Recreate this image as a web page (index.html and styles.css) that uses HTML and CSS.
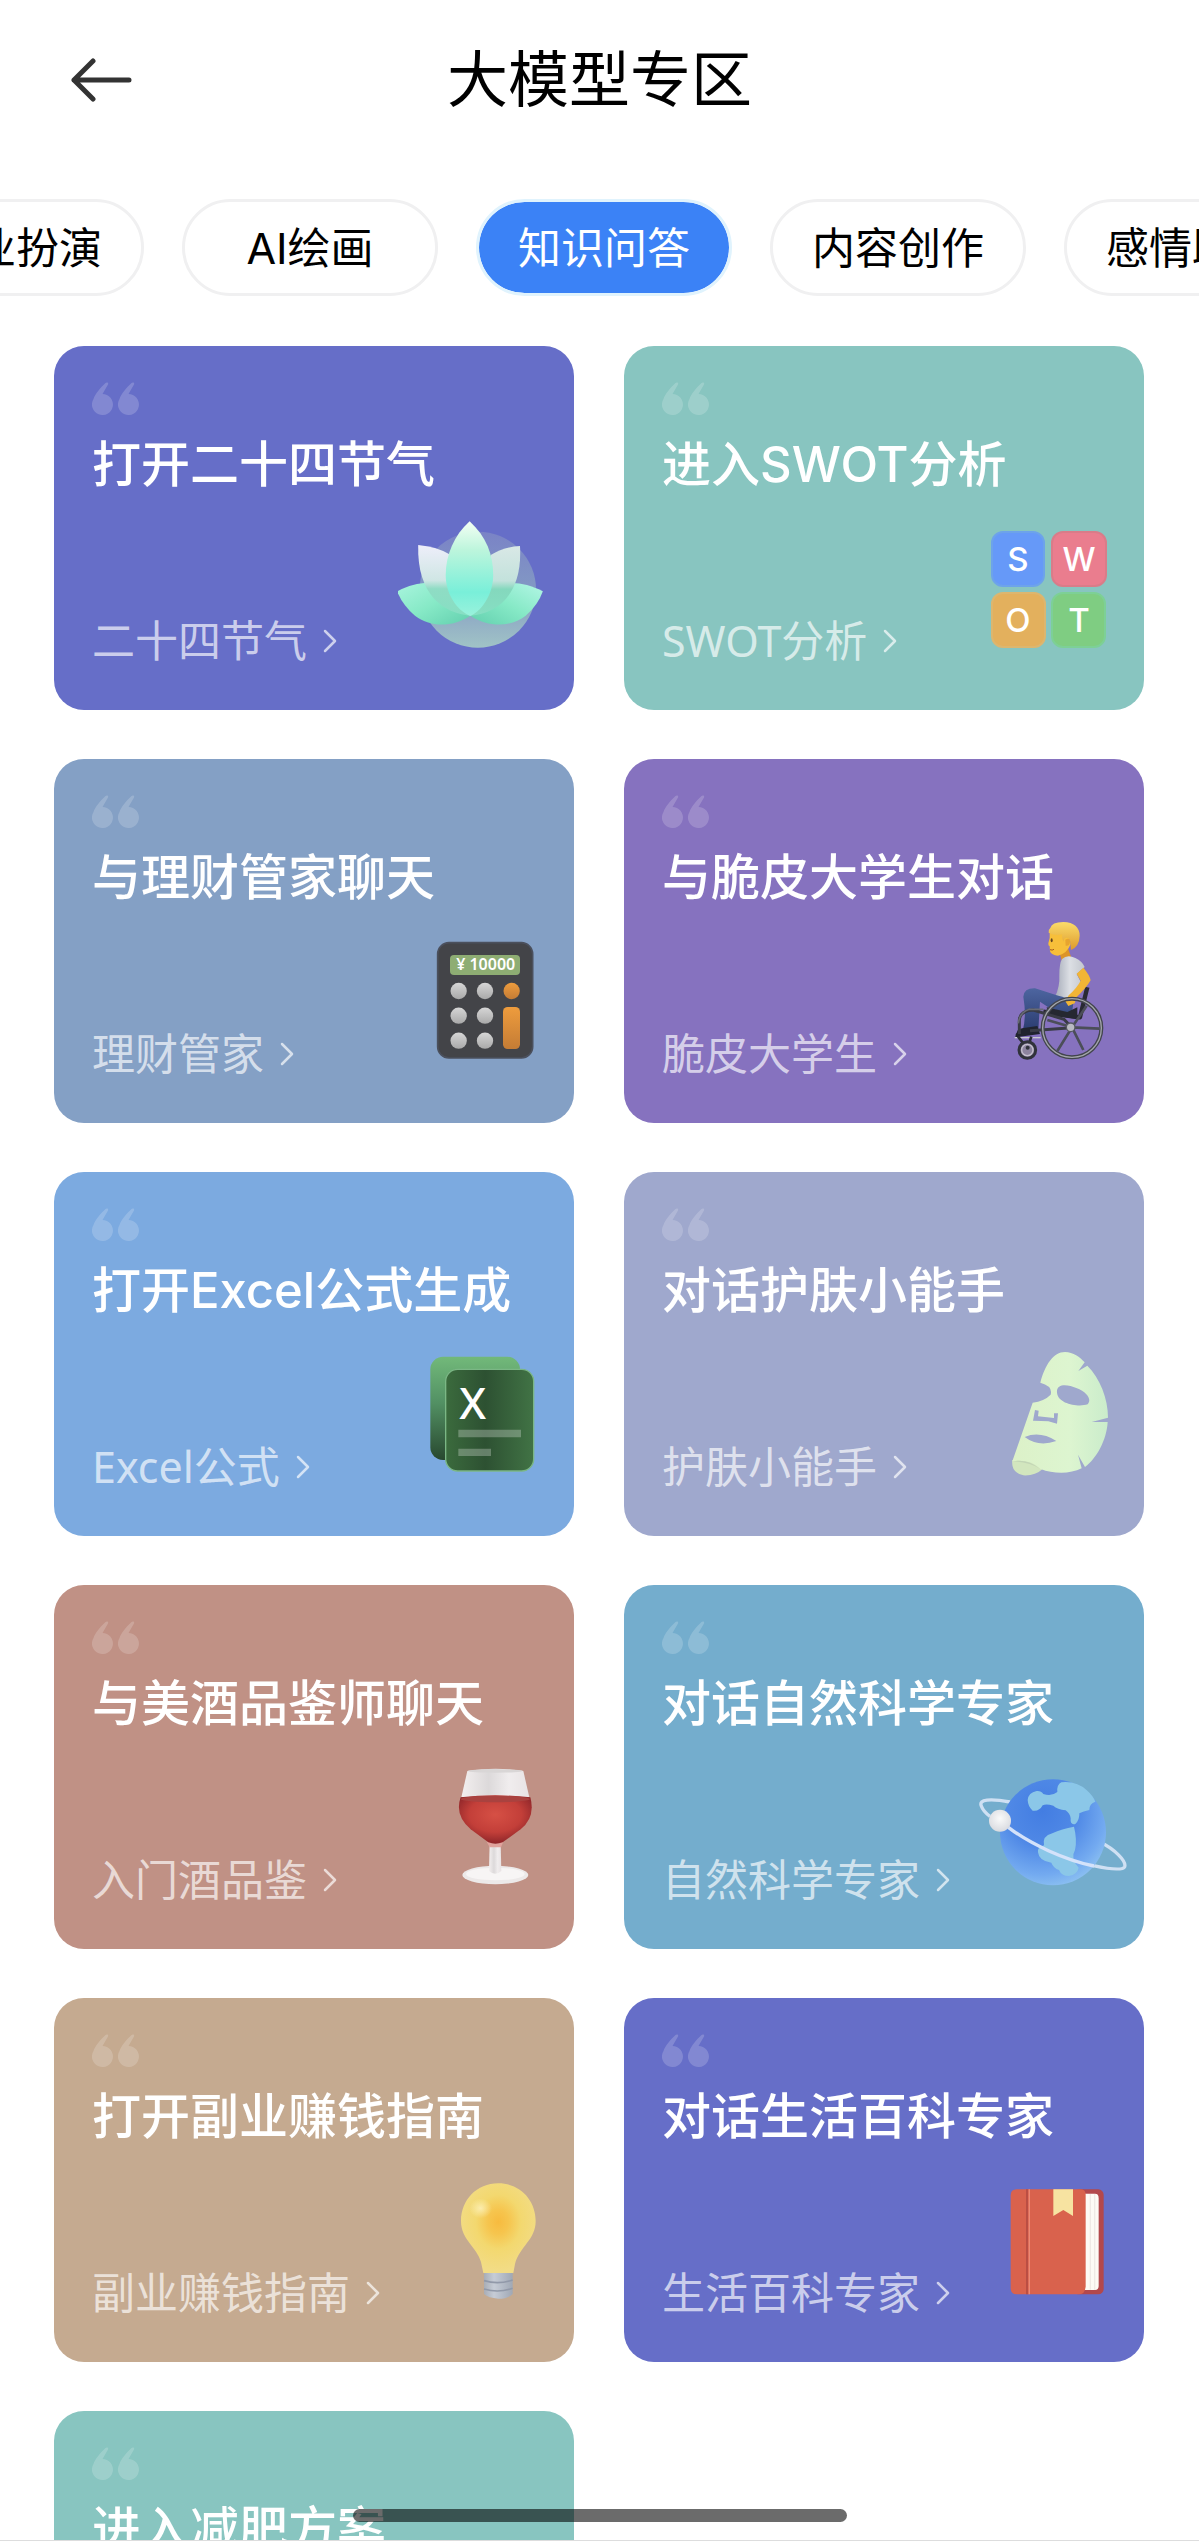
FILE: index.html
```html
<!DOCTYPE html>
<html lang="zh-CN">
<head>
<meta charset="utf-8">
<meta name="viewport" content="width=device-width, initial-scale=1">
<title>大模型专区</title>
<link rel="stylesheet" href="styles.css">
</head>
<body>
<svg class="defs" aria-hidden="true">
  <symbol id="quote" viewBox="0 0 48 33">
    <path d="M15 0.500C16 .5 16.500 1.500 16 2.500L10.500 12A10.500 10.500 0 1 1 1.500 17C3 12 9 5 13.500 1Q14.200 .4 15 .5Z"/>
    <path d="M41 0.500C42 .5 42.500 1.500 42 2.500L36.500 12A10.500 10.500 0 1 1 27.500 17C29 12 35 5 39.500 1Q40.200 .4 41 .5Z"/>
  </symbol>
  <symbol id="chevron" viewBox="0 0 14 24">
    <path d="M2 2L12 12L2 22" fill="none" stroke="currentColor" stroke-width="2.500" stroke-linecap="round" stroke-linejoin="round"/>
  </symbol>
</svg>
<div class="app">
  <header class="header">
    <button class="back" type="button" aria-label="返回">
      <svg class="back-icon" viewBox="0 0 62 44" aria-hidden="true"><path d="M23 3L4 22L23 41M4 22H59" fill="none" stroke="#333" stroke-width="5" stroke-linecap="round" stroke-linejoin="round"/></svg>
    </button>
    <h1 class="page-title">大模型专区</h1>
  </header>

  <nav class="tabs" aria-label="分类">
    <button class="tab" type="button">职业扮演</button>
    <button class="tab" type="button">AI绘画</button>
    <button class="tab tab-active" type="button" aria-current="true">知识问答</button>
    <button class="tab" type="button">内容创作</button>
    <button class="tab" type="button">感情助手</button>
  </nav>

  <main class="cards">
    <a class="card indigo" href="#solar-terms">
      <svg class="quote" aria-hidden="true"><use href="#quote"/></svg>
      <h2 class="card-title">打开二十四节气</h2>
      <div class="card-foot">
        <span class="card-name">二十四节气<svg class="chevron" aria-hidden="true"><use href="#chevron"/></svg></span>
        <svg class="art" viewBox="1074 513 480 480" aria-hidden="true">
          <defs>
            <linearGradient id="petalMid" x1="0" y1="0" x2="0" y2="1"><stop offset="0" stop-color="#f4fff4"/><stop offset=".3" stop-color="#bdf5dc"/><stop offset=".75" stop-color="#79efd9"/><stop offset="1" stop-color="#9af2dc"/></linearGradient>
            <linearGradient id="petalBack" x1="0" y1="0" x2="0" y2="1"><stop offset="0" stop-color="#eeeefa"/><stop offset=".5" stop-color="#cfe6e4"/><stop offset=".62" stop-color="#8fdcc4"/><stop offset="1" stop-color="#86dfc3"/></linearGradient>
            <linearGradient id="petalBackR" x1="0" y1="0" x2="0" y2="1"><stop offset="0" stop-color="#d9e8e6"/><stop offset=".5" stop-color="#c3e2dc"/><stop offset=".62" stop-color="#84d8bd"/><stop offset="1" stop-color="#86dfc3"/></linearGradient>
            <linearGradient id="petalLow" x1="0" y1="0" x2="1" y2="1"><stop offset="0" stop-color="#a9f5de"/><stop offset=".5" stop-color="#86e9c6"/><stop offset="1" stop-color="#62cfae"/></linearGradient>
            <linearGradient id="petalLowR" x1="1" y1="0" x2="0" y2="1"><stop offset="0" stop-color="#b4f6e6"/><stop offset=".5" stop-color="#86e9c6"/><stop offset="1" stop-color="#62cfae"/></linearGradient>
            <linearGradient id="moon" x1="0" y1="0" x2="0" y2="1"><stop offset="0" stop-color="#7a83c6"/><stop offset=".5" stop-color="#8298c4"/><stop offset="1" stop-color="#a0c3c6"/></linearGradient>
          </defs>
          <g transform="scale(1.0714 1)">
            <ellipse cx="1226" cy="779" rx="163" ry="174" fill="url(#moon)"/>
            <path d="M1000 784C1060 750 1125 750 1165 790Q1190 830 1205 857C1150 895 1090 890 1050 857Q1015 825 1000 784Z" fill="url(#petalLow)"/>
            <path d="M1408 784C1345 750 1285 750 1245 790Q1215 830 1205 857C1260 895 1320 890 1360 857Q1395 825 1408 784Z" fill="url(#petalLowR)"/>
            <path d="M1059 645Q1110 650 1145 672L1205 857C1130 850 1055 795 1059 645Z" fill="url(#petalBack)"/>
            <path d="M1344 648Q1300 650 1262 675L1205 857C1280 850 1352 795 1344 648Z" fill="url(#petalBackR)"/>
            <path d="M1203 574C1250 620 1269 675 1269 735C1269 790 1240 840 1205 858C1165 840 1136 790 1136 735C1136 675 1160 615 1203 574Z" fill="url(#petalMid)"/>
          </g>
        </svg>
      </div>
    </a>

    <a class="card teal" href="#swot">
      <svg class="quote" aria-hidden="true"><use href="#quote"/></svg>
      <h2 class="card-title">进入SWOT分析</h2>
      <div class="card-foot">
        <span class="card-name">SWOT分析<svg class="chevron" aria-hidden="true"><use href="#chevron"/></svg></span>
        <svg class="art" viewBox="0 0 160 160" aria-hidden="true">
          <g stroke-width="2">
            <rect x="24" y="31" width="52" height="54" rx="11" fill="#6699f8" stroke="#6da3ea"/>
            <rect x="84" y="31" width="54" height="54" rx="11" fill="#ea7d8e" stroke="#d97c89"/>
            <rect x="24" y="92" width="53" height="54" rx="11" fill="#e3b05d" stroke="#dcb66f"/>
            <rect x="84" y="92" width="53" height="54" rx="11" fill="#7fcd82" stroke="#7dd096"/>
          </g>
          <g class="tile-text">
            <text x="50" y="70">S</text><text x="111" y="70">W</text><text x="50" y="131">O</text><text x="111" y="131">T</text>
          </g>
        </svg>
      </div>
    </a>

    <a class="card steel" href="#finance">
      <svg class="quote" aria-hidden="true"><use href="#quote"/></svg>
      <h2 class="card-title">与理财管家聊天</h2>
      <div class="card-foot">
        <span class="card-name">理财管家<svg class="chevron" aria-hidden="true"><use href="#chevron"/></svg></span>
        <svg class="art" viewBox="54 42 480 480" aria-hidden="true">
          <defs>
            <linearGradient id="keyGrey" x1="0" y1="0" x2="0" y2="1"><stop offset="0" stop-color="#d6d6d6"/><stop offset="1" stop-color="#a9a9a9"/></linearGradient>
            <linearGradient id="keyGold" x1="0" y1="0" x2="0" y2="1"><stop offset="0" stop-color="#ee9c3d"/><stop offset="1" stop-color="#c47c35"/></linearGradient>
          </defs>
          <rect x="173" y="128" width="285" height="346" rx="34" fill="#434448" stroke="#4b505d" stroke-width="5"/>
          <rect x="210" y="165" width="210" height="60" rx="12" fill="#8ead73"/>
          <text class="calc-text" x="317" y="211">¥ 10000</text>
          <g fill="url(#keyGrey)">
            <circle cx="236" cy="273" r="24.500"/><circle cx="315" cy="273" r="24.500"/>
            <circle cx="236" cy="347" r="24.500"/><circle cx="315" cy="347" r="24.500"/>
            <circle cx="236" cy="422" r="24.500"/><circle cx="315" cy="422" r="24.500"/>
          </g>
          <circle cx="395" cy="273" r="24.500" fill="url(#keyGold)"/>
          <rect x="369" y="321" width="51" height="126" rx="14" fill="url(#keyGold)"/>
        </svg>
      </div>
    </a>

    <a class="card purple" href="#student">
      <svg class="quote" aria-hidden="true"><use href="#quote"/></svg>
      <h2 class="card-title">与脆皮大学生对话</h2>
      <div class="card-foot">
        <span class="card-name">脆皮大学生<svg class="chevron" aria-hidden="true"><use href="#chevron"/></svg></span>
        <svg class="art" viewBox="-36 42 480 480" aria-hidden="true">
          <defs>
            <linearGradient id="shirt" x1="0" y1="0" x2="1" y2="0"><stop offset="0" stop-color="#a5abb8"/><stop offset=".5" stop-color="#dcdfe4"/><stop offset="1" stop-color="#c3c7ce"/></linearGradient>
            <linearGradient id="jeans" x1="0" y1="0" x2="0" y2="1"><stop offset="0" stop-color="#4d65a0"/><stop offset="1" stop-color="#2b3c70"/></linearGradient>
            <linearGradient id="hair" x1="0" y1="0" x2="0" y2="1"><stop offset="0" stop-color="#fbdc6a"/><stop offset="1" stop-color="#dd9a2c"/></linearGradient>
          </defs>
          <path d="M322 262L300 352L190 335" fill="none" stroke="#292a33" stroke-width="13" stroke-linejoin="round"/>
          <path d="M228 152L262 140L276 178L248 190L240 164Z" fill="#dc9427"/>
          <path d="M209 96Q211 116 205 130Q204 137 209 139L210 154Q214 166 234 167Q262 160 272 132L262 92Z" fill="#f7bf3a"/>
          <path d="M206 98Q204 90 211 84Q215 66 250 66Q298 68 299 107Q298 140 273 150L270 122Q265 108 253 116L250 125Q244 110 247 103Q225 108 206 98Z" fill="url(#hair)"/>
          <path d="M256 119q14-8 14 7q-2 14-13 11z" fill="#e7a42f"/>
          <ellipse cx="215" cy="121" rx="3" ry="6" fill="#634321"/><path d="M210 149q7 3 12-1" fill="none" stroke="#a35b1b" stroke-width="3"/>
          <path d="M246 177Q262 162 286 174Q307 184 314 201L290 222L302 245L284 300L225 290Q240 260 238 225Q238 190 246 177Z" fill="url(#shirt)"/>
          <path d="M130 290Q132 264 165 265L235 287Q260 292 280 310L275 346L205 322L180 305L175 390L128 392Q140 350 130 290Z" fill="url(#jeans)"/>
          <path d="M126 385L172 378L180 402L106 412Q106 392 126 385Z" fill="#20232e"/>
          <path d="M104 413H182" stroke="#c8c8cf" stroke-width="4"/>
          <path d="M200 322L262 336L292 322V358L205 346Z" fill="#252831"/>
          <path d="M290 221L310 203Q329 225 332 241Q318 265 290 291L284 310L265 318L256 304L266 286Q292 262 302 242Z" fill="#f1b535"/>
          <path d="M118 402V360Q120 332 160 330L252 358L276 383L150 392" fill="none" stroke="#393b45" stroke-width="9"/>
          <path d="M115 370Q118 338 148 328H190" fill="none" stroke="#686b75" stroke-width="5"/>
          <circle cx="276" cy="384" r="88" fill="none" stroke="#42454d" stroke-width="12"/>
          <circle cx="276" cy="384" r="88" fill="none" stroke="#a4a6ac" stroke-width="4"/>
          <path d="M276 382L320 317M276 382L358 386M276 382L232 453M276 382L202 360M276 382L310 450" stroke="#4b4e58" stroke-width="8"/>
          <circle cx="272" cy="382" r="13" fill="#b9bac2" stroke="#555861" stroke-width="4"/>
          <path d="M114 410L142 445L154 410" fill="none" stroke="#292b34" stroke-width="8"/>
          <circle cx="142" cy="450" r="25" fill="#8d849f" stroke="#30323b" stroke-width="9"/><circle cx="142" cy="450" r="17" fill="none" stroke="#c4bfce" stroke-width="4"/><circle cx="143" cy="443" r="6" fill="#30323b"/>
        </svg>
      </div>
    </a>

    <a class="card sky" href="#excel">
      <svg class="quote" aria-hidden="true"><use href="#quote"/></svg>
      <h2 class="card-title">打开Excel公式生成</h2>
      <div class="card-foot">
        <span class="card-name">Excel公式<svg class="chevron" aria-hidden="true"><use href="#chevron"/></svg></span>
        <svg class="art" viewBox="-6 -9 480 480" aria-hidden="true">
          <defs>
            <linearGradient id="sheetBack" x1="0" y1="0" x2="0" y2="1"><stop offset="0" stop-color="#72b97a"/><stop offset=".45" stop-color="#529063"/><stop offset="1" stop-color="#28482f"/></linearGradient>
            <linearGradient id="sheet" x1="0" y1="0" x2="1" y2="0"><stop offset="0" stop-color="#3b6b3d"/><stop offset=".45" stop-color="#2d5132"/><stop offset="1" stop-color="#417345"/></linearGradient>
          </defs>
          <rect x="91" y="80" width="269" height="310" rx="38" fill="url(#sheetBack)"/>
          <rect x="137" y="118" width="264" height="305" rx="36" fill="url(#sheet)" stroke="#7bb785" stroke-width="4"/>
          <text class="sheet-text" x="218" y="266">X</text>
          <path d="M175 299H363V322H175ZM175 356H273V378H175Z" fill="#fff" opacity=".27"/>
        </svg>
      </div>
    </a>

    <a class="card lavender" href="#skincare">
      <svg class="quote" aria-hidden="true"><use href="#quote"/></svg>
      <h2 class="card-title">对话护肤小能手</h2>
      <div class="card-foot">
        <span class="card-name">护肤小能手<svg class="chevron" aria-hidden="true"><use href="#chevron"/></svg></span>
        <svg class="art" viewBox="-36 -9 480 480" aria-hidden="true">
          <defs>
            <linearGradient id="mask" x1="0" y1="0" x2="1" y2="0"><stop offset="0" stop-color="#dcf1c8"/><stop offset=".6" stop-color="#ddf5d0"/><stop offset="1" stop-color="#caeccb"/></linearGradient>
          </defs>
          <path d="M97 390Q92 428 130 436Q165 438 188 417L150 390Z" fill="#d2e6be"/>
          <path fill-rule="evenodd" fill="url(#mask)" d="M181 158C195 105 220 66 255 66C280 66 300 82 314 97L295 123L322 107C360 145 384 205 384 263L335 276L383 276C380 330 350 385 315 411L294 374L305 415C270 433 220 432 182 417Q150 385 97 394L158 218Q192 214 212 194Q219 168 181 158ZM231 188C228 158 265 163 289 174C325 188 335 210 323 223C295 232 234 222 231 188ZM134 321Q180 302 229 333Q175 352 134 321ZM165 240L159 272L205 274L231 281L234 250L222 250L222 264L174 259L176 242Z"/>
          <path d="M98 394Q142 385 181 417Q150 397 98 394Z" fill="#c2d5b5"/>
        </svg>
      </div>
    </a>

    <a class="card rose" href="#wine">
      <svg class="quote" aria-hidden="true"><use href="#quote"/></svg>
      <h2 class="card-title">与美酒品鉴师聊天</h2>
      <div class="card-foot">
        <span class="card-name">入门酒品鉴<svg class="chevron" aria-hidden="true"><use href="#chevron"/></svg></span>
        <svg class="art" viewBox="-66 0 480 480" aria-hidden="true">
          <defs>
            <radialGradient id="wine" cx=".5" cy=".4" r=".6"><stop offset="0" stop-color="#d65045"/><stop offset=".6" stop-color="#c33f39"/><stop offset="1" stop-color="#8d2529"/></radialGradient>
            <linearGradient id="glass" x1="0" y1="0" x2="1" y2="0"><stop offset="0" stop-color="#f3efef"/><stop offset=".4" stop-color="#dcd9da"/><stop offset=".7" stop-color="#f0edee"/><stop offset="1" stop-color="#e8e3e4"/></linearGradient>
          </defs>
          <ellipse cx="226" cy="405" rx="99" ry="28" fill="#ece9e9"/>
          <ellipse cx="226" cy="402" rx="88" ry="19" fill="#f7f5f5"/>
          <path d="M209 310H242L244 393Q226 410 207 393Z" fill="url(#glass)"/>
          <path d="M142 93Q226 80 310 93L328 172H124Z" fill="url(#glass)"/>
          <path d="M200 305H250L243 322H209Z" fill="#e0a39d"/>
          <path d="M122 172Q226 160 331 172Q347 232 302 268L248 307Q226 315 205 307L152 268Q103 225 122 172Z" fill="url(#wine)"/>
          <ellipse cx="226" cy="177" rx="104" ry="10" fill="#a9423f"/>
          <ellipse cx="226" cy="93" rx="82" ry="5" fill="#d9d6d6"/>
        </svg>
      </div>
    </a>

    <a class="card ocean" href="#science">
      <svg class="quote" aria-hidden="true"><use href="#quote"/></svg>
      <h2 class="card-title">对话自然科学专家</h2>
      <div class="card-foot">
        <span class="card-name">自然科学专家<svg class="chevron" aria-hidden="true"><use href="#chevron"/></svg></span>
        <svg class="art" viewBox="24 -30 480 480" aria-hidden="true">
          <defs>
            <radialGradient id="globe" cx=".4" cy=".3" r=".75"><stop offset="0" stop-color="#437de2"/><stop offset=".45" stop-color="#5089e6"/><stop offset=".8" stop-color="#73aaf0"/><stop offset="1" stop-color="#8fc3f1"/></radialGradient>
            <radialGradient id="moonlet" cx=".5" cy=".4" r=".6"><stop offset="0" stop-color="#fafafa"/><stop offset="1" stop-color="#d9dbe0"/></radialGradient>
          </defs>
          <path d="M150 156C90 145 55 148 64 168C68 180 75 188 90 199M420 276C465 298 500 334 494 350C488 362 450 358 400 347" fill="none" stroke="#cfe0f3" stroke-width="10"/>
          <circle cx="279" cy="247" r="159" fill="url(#globe)"/>
          <path d="M203 150Q205 128 230 123Q244 122 250 132Q275 140 292 126Q290 104 304 97Q350 92 382 122Q400 138 406 155Q388 160 388 180Q370 184 358 190Q359 210 346 222Q330 226 332 205Q330 190 317 181Q292 178 280 167Q258 160 248 166Q238 185 218 182Q204 170 203 150ZM342 230Q352 270 345 300Q330 325 356 353Q352 374 327 378Q304 378 297 360Q280 354 274 338Q237 334 234 307Q231 292 252 286Q246 258 277 250Q305 236 342 230Z" fill="#8bc7e8"/>
          <path d="M145 232C210 282 315 330 402 348" fill="none" stroke="#d4e2fa" stroke-width="10"/>
          <circle cx="120" cy="212" r="33" fill="url(#moonlet)"/>
        </svg>
      </div>
    </a>

    <a class="card sand" href="#side-job">
      <svg class="quote" aria-hidden="true"><use href="#quote"/></svg>
      <h2 class="card-title">打开副业赚钱指南</h2>
      <div class="card-foot">
        <span class="card-name">副业赚钱指南<svg class="chevron" aria-hidden="true"><use href="#chevron"/></svg></span>
        <svg class="art" viewBox="-96 -21 480 480" aria-hidden="true">
          <defs>
            <radialGradient id="bulb" cx=".5" cy=".43" r=".55"><stop offset="0" stop-color="#f7bb3f"/><stop offset=".25" stop-color="#f6c54e"/><stop offset=".55" stop-color="#f3d86f"/><stop offset="1" stop-color="#f2dc86"/></radialGradient>
            <radialGradient id="shine"><stop offset="0" stop-color="#fff6c8" stop-opacity=".7"/><stop offset="1" stop-color="#fff6c8" stop-opacity="0"/></radialGradient>
            <linearGradient id="screw" x1="0" y1="0" x2="1" y2="0"><stop offset="0" stop-color="#a8adb6"/><stop offset=".35" stop-color="#c6ccd6"/><stop offset="1" stop-color="#a0a8b5"/></linearGradient>
          </defs>
          <path d="M162 335H248V402Q235 416 205 416Q175 414 162 402Z" fill="url(#screw)"/>
          <path d="M162 362Q205 375 248 360M162 387Q205 400 248 385" fill="none" stroke="#9199a9" stroke-width="5"/>
          <path d="M205 70C270 70 317 120 317 183C317 240 268 260 255 312L250 339H160L153 306C140 260 93 240 93 183C93 120 140 70 205 70Z" fill="url(#bulb)"/>
          <ellipse cx="152" cy="145" rx="34" ry="30" fill="url(#shine)"/>
        </svg>
      </div>
    </a>

    <a class="card indigo" href="#encyclopedia">
      <svg class="quote" aria-hidden="true"><use href="#quote"/></svg>
      <h2 class="card-title">对话生活百科专家</h2>
      <div class="card-foot">
        <span class="card-name">生活百科专家<svg class="chevron" aria-hidden="true"><use href="#chevron"/></svg></span>
        <svg class="art" viewBox="-36 -21 480 480" aria-hidden="true">
          <rect x="280" y="88" width="91" height="315" rx="16" fill="#b3484c"/>
          <path d="M305 101H345Q356 101 356 114V377Q356 390 345 390H305Z" fill="#fdfaf5"/>
          <path d="M331 102V389M344 102V389" stroke="#efe9e5" stroke-width="4"/>
          <path d="M110 88H300Q317 88 317 104V380Q315 403 295 403H110Q92 403 92 385V106Q92 88 110 88Z" fill="#d9624d"/>
          <path d="M141 88V403" stroke="#b54b42" stroke-width="5"/><path d="M148 88V403" stroke="#ec8a76" stroke-width="4"/>
          <path d="M220 88H279V168L250 150L220 168Z" fill="#f7e3a1"/>
        </svg>
      </div>
    </a>

    <a class="card teal" href="#diet">
      <svg class="quote" aria-hidden="true"><use href="#quote"/></svg>
      <h2 class="card-title">进入减肥方案</h2>
      <div class="card-foot"></div>
    </a>
  </main>
  <div class="home-indicator"></div>
</div>
</body>
</html>
```
FILE: styles.css
```css
* {
  box-sizing: border-box;
}

body {
  margin: 0;
  background: #fff;
  color: #000;
  font-family: Inter, "Noto Sans CJK SC", sans-serif;
}

.defs {
  display: none;
}

.app {
  position: relative;
  display: flex;
  flex-direction: column;
  height: 100vh;
  overflow: hidden;
  border-bottom: 1px solid #ddd;
}

.header {
  display: grid;
  grid-template-columns: 1fr auto 1fr;
  align-items: center;
  flex: none;
  padding: 36px 70px 75px;
}

.back {
  justify-self: start;
  display: flex;
  padding: 0;
  border: 0;
  background: none;
}

.back-icon {
  width: 62px;
  height: 44px;
}

.page-title {
  margin: 0;
  font-size: 61px;
  font-weight: 400;
  line-height: 88px;
}

.tabs {
  display: flex;
  flex: none;
  justify-content: center;
  gap: 38px;
  padding: 0 0 50px 9px;
  overflow: hidden;
}

.tab {
  flex: none;
  width: 256px;
  height: 97px;
  padding: 0;
  border: 3px solid #f0f0f1;
  border-radius: 49px;
  background: #fff;
  color: #000;
  font-family: inherit;
  font-size: 43px;
  line-height: 60px;
}

.tab-active {
  border-color: #e0f3fd;
  background: #3b82f6;
  background-clip: padding-box;
  color: #fff;
}

.cards {
  display: grid;
  grid-template-columns: repeat(2, minmax(0, 1fr));
  align-content: start;
  flex: 1;
  min-height: 0;
  gap: 49px 50px;
  padding: 0 55px 0 54px;
  overflow-y: auto;
  scrollbar-width: none;
}

.card {
  display: flex;
  flex-direction: column;
  padding: 36px 16px 47px 38px;
  border-radius: 30px;
  color: #fff;
  text-decoration: none;
}

.indigo { background: #666ec8; }
.teal { background: #88c5c0; }
.steel { background: #84a0c5; }
.purple { background: #8672bf; }
.sky { background: #7caae0; }
.lavender { background: #9fa8cd; }
.rose { background: #c09185; }
.ocean { background: #74adcd; }
.sand { background: #c5aa90; }

.quote {
  width: 48px;
  height: 33px;
  margin-bottom: 18px;
  fill: #fff;
  opacity: .18;
}

.card-title {
  margin: 0;
  font-size: 49px;
  font-weight: 500;
  line-height: 64px;
  white-space: nowrap;
}

.card-foot {
  display: flex;
  align-items: flex-end;
  justify-content: space-between;
  min-height: 162px;
  margin-top: 4px;
}

.card-name {
  display: flex;
  align-items: center;
  gap: 16px;
  color: rgba(255, 255, 255, .68);
  font-family: "Noto Sans", "Noto Sans CJK SC", sans-serif;
  font-size: 43px;
  line-height: 44px;
  white-space: nowrap;
}

.chevron {
  width: 14px;
  height: 24px;
}

.art {
  flex: none;
  align-self: flex-start;
  width: 160px;
  height: 160px;
  margin-left: -80px;
}

.tile-text {
  fill: #fff;
  font-size: 33px;
  font-weight: 500;
  text-anchor: middle;
}

.calc-text {
  fill: #fff;
  font-family: "Noto Sans", sans-serif;
  font-size: 48px;
  font-weight: 600;
  text-anchor: middle;
}

.sheet-text {
  fill: #fff;
  font-family: "Noto Sans", sans-serif;
  font-size: 132px;
  font-weight: 500;
  text-anchor: middle;
}

.home-indicator {
  position: absolute;
  bottom: 18px;
  left: 50%;
  width: 494px;
  height: 13px;
  border-radius: 7px;
  background: rgba(0, 0, 0, .58);
  transform: translateX(-50%);
}
```
